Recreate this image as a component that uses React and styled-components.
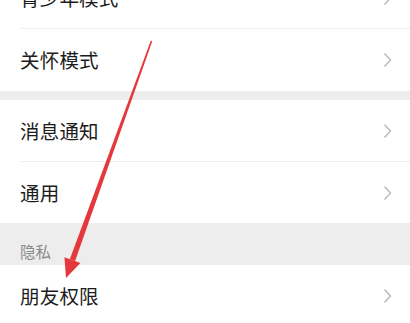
import React from "react";
import styled, { createGlobalStyle } from "styled-components";

const GlobalStyle = createGlobalStyle`
  html, body {
    margin: 0;
    padding: 0;
    background: #ffffff;
    overflow: hidden;
  }
  body {
    font-family: "Noto Sans CJK SC", "Noto Sans", sans-serif;
  }
`;

const Page = styled.div`
  position: relative;
  width: 410px;
  height: 323px;
  overflow: hidden;
  background: #ffffff;
`;

const List = styled.div`
  display: flex;
  flex-direction: column;
  margin-top: -33px;
`;

const Group = styled.div`
  display: flex;
  flex-direction: column;
  background: #ffffff;
`;

const Gap = styled.div`
  height: 9px;
  background: #ededed;
`;

const SectionHeader = styled.div`
  height: 42px;
  display: flex;
  align-items: flex-end;
  padding: 0 0 6px 20px;
  box-sizing: border-box;
  background: #ededed;
  color: #8a8a8a;
  font-size: 15.5px;
  line-height: 1;
`;

const RowWrap = styled.div`
  position: relative;
  height: ${(p) => p.$h || 62}px;
  display: flex;
  align-items: center;
  justify-content: space-between;
  padding: 0 18px 0 20px;
  box-sizing: border-box;
  &::after {
    content: "";
    display: ${(p) => (p.$divider ? "block" : "none")};
    position: absolute;
    left: 21px;
    right: 0;
    bottom: 0;
    height: 1px;
    background: #ececec;
  }
`;

const Label = styled.span`
  font-size: 19.5px;
  color: #1c1c1c;
  line-height: 1;
  letter-spacing: 0.2px;
`;

const Chevron = () => (
  <svg width="9" height="16" viewBox="0 0 9 16">
    <path d="M1.5 1.5 L7.5 8 L1.5 14.5" fill="none" stroke="#b9b9b9" strokeWidth="1.4" />
  </svg>
);

const Row = ({ label, h, divider }) => (
  <RowWrap $h={h} $divider={divider}>
    <Label>{label}</Label>
    <Chevron />
  </RowWrap>
);

const ArrowLayer = styled.svg`
  position: absolute;
  left: 0;
  top: 0;
  pointer-events: none;
`;

// red annotation arrow drawn on top of the screenshot
const Arrow = () => {
  const top = [151.5, 41];
  const tip = [66, 278];
  const dx = tip[0] - top[0];
  const dy = tip[1] - top[1];
  const len = Math.hypot(dx, dy);
  const u = [dx / len, dy / len];
  const n = [-u[1], u[0]];
  const base = [tip[0] - 19 * u[0], tip[1] - 19 * u[1]];
  const pt = (p, k, w) => `${p[0] + n[0] * w * k},${p[1] + n[1] * w * k}`;
  const shaft = [pt(top, 1, 0.8), pt(base, 1, 2.8), pt(base, -1, 2.8), pt(top, -1, 0.8)].join(" ");
  const head = [pt(base, 1, 8.5), `${tip[0]},${tip[1]}`, pt(base, -1, 8.5)].join(" ");
  return (
    <ArrowLayer width="410" height="323" viewBox="0 0 410 323">
      <polygon points={shaft} fill="#e4383c" />
      <polygon points={head} fill="#e4383c" />
    </ArrowLayer>
  );
};

export default function App() {
  return (
    <Page>
      <GlobalStyle />
      <List>
        <Group>
          <Row label="青少年模式" divider />
          <Row label="关怀模式" />
        </Group>
        <Gap />
        <Group>
          <Row label="消息通知" h={62} divider />
          <Row label="通用" h={61} />
        </Group>
        <SectionHeader>隐私</SectionHeader>
        <Group>
          <Row label="朋友权限" />
        </Group>
      </List>
      <Arrow />
    </Page>
  );
}
